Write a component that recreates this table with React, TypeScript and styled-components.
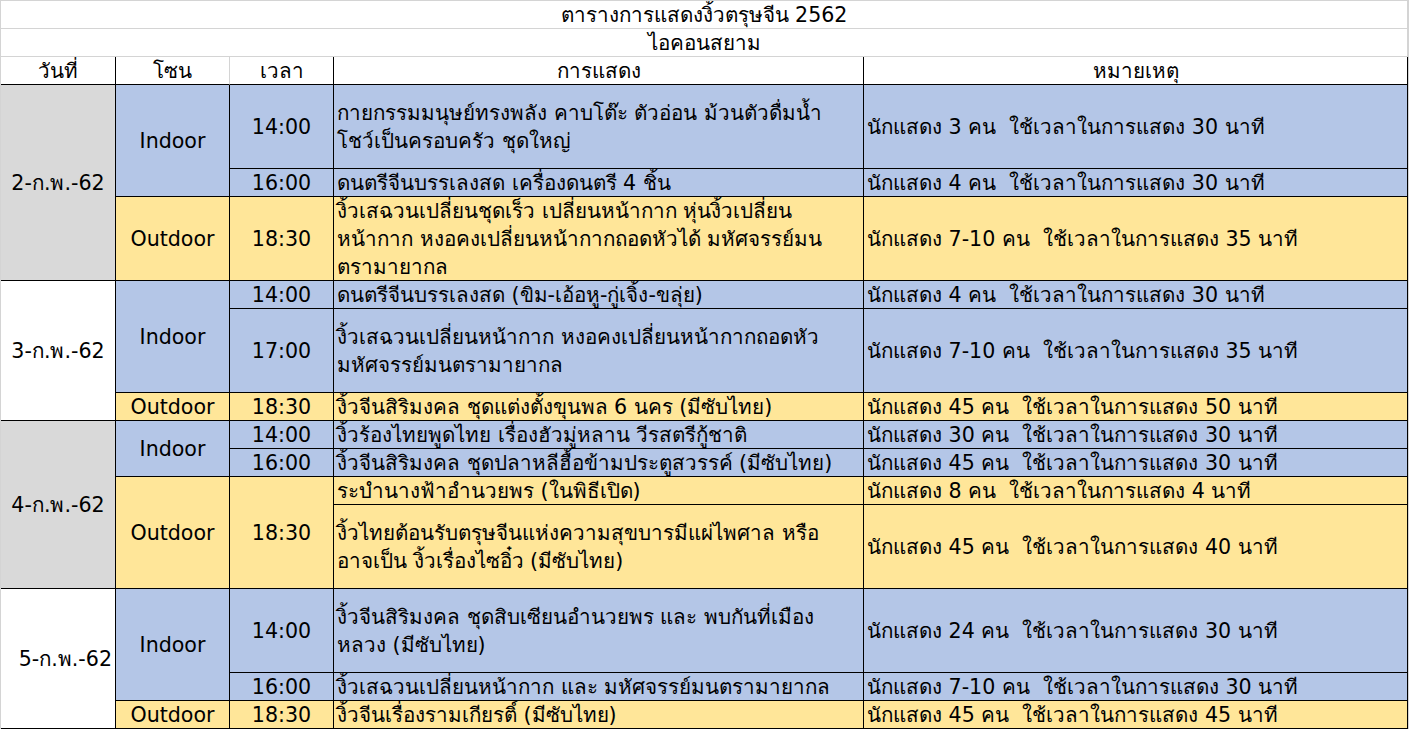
import React from "react";
import styled, { createGlobalStyle, css } from "styled-components";

const Global = createGlobalStyle`
  html, body { margin: 0; padding: 0; background: #ffffff; }
  body { font-family: Tahoma, "DejaVu Sans", "Noto Sans", sans-serif; color: #000; }
`;

const Sheet = styled.div`
  display: grid;
  grid-template-columns: 115px 114px 104px 530px 544px;
  grid-auto-rows: 28px;
  width: 1407px;
  border-left: 1px solid #d4d4d4;
  border-top: 1px solid #d4d4d4;
  border-right: 1px solid #d4d4d4;
  font-size: 20.6px;
  line-height: 28px;
`;

type Tone = "white" | "gray" | "blue" | "yellow";
const tones: Record<Tone, string> = {
  white: "#ffffff",
  gray: "#d9d9d9",
  blue: "#b4c6e7",
  yellow: "#ffe699",
};

const Cell = styled.div<{
  $tone?: Tone;
  $align?: "left" | "center" | "right";
  $row: string;
  $col: string;
  $soft?: boolean;
  $softRight?: boolean;
}>`
  box-sizing: border-box;
  grid-row: ${(p) => p.$row};
  grid-column: ${(p) => p.$col};
  background: ${(p) => tones[p.$tone ?? "white"]};
  border-right: 1px solid ${(p) => (p.$soft || p.$softRight ? "#d4d4d4" : "#000")};
  border-bottom: 1px solid ${(p) => (p.$soft ? "#d4d4d4" : "#000")};
  display: flex;
  align-items: center;
  white-space: pre-wrap;
  overflow: hidden;
  ${(p) =>
    p.$align === "left"
      ? css`justify-content: flex-start; padding-left: 3px;`
      : p.$align === "right"
      ? css`justify-content: flex-end; padding-right: 3px;`
      : css`justify-content: center; text-align: center;`}
`;

type Row = {
  date?: { text: string; span: number; tone: Tone; align?: "center" | "right" };
  zone?: { text: string; span: number; tone: Tone };
  time?: { text: string; span: number; tone: Tone };
  show: string;
  note: string;
  span: number;
  tone: Tone;
};

const rows: Row[] = [
  {
    date: { text: "2-ก.พ.-62", span: 7, tone: "gray" },
    zone: { text: "Indoor", span: 4, tone: "blue" },
    time: { text: "14:00", span: 3, tone: "blue" },
    show: "กายกรรมมนุษย์ทรงพลัง คาบโต๊ะ ตัวอ่อน ม้วนตัวดื่มน้ำ\nโชว์เป็นครอบครัว ชุดใหญ่",
    note: "นักแสดง 3 คน  ใช้เวลาในการแสดง 30 นาที",
    span: 3,
    tone: "blue",
  },
  {
    time: { text: "16:00", span: 1, tone: "blue" },
    show: "ดนตรีจีนบรรเลงสด เครื่องดนตรี 4 ชิ้น",
    note: "นักแสดง 4 คน  ใช้เวลาในการแสดง 30 นาที",
    span: 1,
    tone: "blue",
  },
  {
    zone: { text: "Outdoor", span: 3, tone: "yellow" },
    time: { text: "18:30", span: 3, tone: "yellow" },
    show: "งิ้วเสฉวนเปลี่ยนชุดเร็ว เปลี่ยนหน้ากาก หุ่นงิ้วเปลี่ยน\nหน้ากาก หงอคงเปลี่ยนหน้ากากถอดหัวได้ มหัศจรรย์มน\nตรามายากล",
    note: "นักแสดง 7-10 คน  ใช้เวลาในการแสดง 35 นาที",
    span: 3,
    tone: "yellow",
  },
  {
    date: { text: "3-ก.พ.-62", span: 5, tone: "white" },
    zone: { text: "Indoor", span: 4, tone: "blue" },
    time: { text: "14:00", span: 1, tone: "blue" },
    show: "ดนตรีจีนบรรเลงสด (ขิม-เอ้อหู-กู่เจิ้ง-ขลุ่ย)",
    note: "นักแสดง 4 คน  ใช้เวลาในการแสดง 30 นาที",
    span: 1,
    tone: "blue",
  },
  {
    time: { text: "17:00", span: 3, tone: "blue" },
    show: "งิ้วเสฉวนเปลี่ยนหน้ากาก หงอคงเปลี่ยนหน้ากากถอดหัว\nมหัศจรรย์มนตรามายากล",
    note: "นักแสดง 7-10 คน  ใช้เวลาในการแสดง 35 นาที",
    span: 3,
    tone: "blue",
  },
  {
    zone: { text: "Outdoor", span: 1, tone: "yellow" },
    time: { text: "18:30", span: 1, tone: "yellow" },
    show: "งิ้วจีนสิริมงคล ชุดแต่งตั้งขุนพล 6 นคร (มีซับไทย)",
    note: "นักแสดง 45 คน  ใช้เวลาในการแสดง 50 นาที",
    span: 1,
    tone: "yellow",
  },
  {
    date: { text: "4-ก.พ.-62", span: 6, tone: "gray" },
    zone: { text: "Indoor", span: 2, tone: "blue" },
    time: { text: "14:00", span: 1, tone: "blue" },
    show: "งิ้วร้องไทยพูดไทย เรื่องฮัวมู่หลาน วีรสตรีกู้ชาติ",
    note: "นักแสดง 30 คน  ใช้เวลาในการแสดง 30 นาที",
    span: 1,
    tone: "blue",
  },
  {
    time: { text: "16:00", span: 1, tone: "blue" },
    show: "งิ้วจีนสิริมงคล ชุดปลาหลีฮื้อข้ามประตูสวรรค์ (มีซับไทย)",
    note: "นักแสดง 45 คน  ใช้เวลาในการแสดง 30 นาที",
    span: 1,
    tone: "blue",
  },
  {
    zone: { text: "Outdoor", span: 4, tone: "yellow" },
    time: { text: "18:30", span: 4, tone: "yellow" },
    show: "ระบำนางฟ้าอำนวยพร (ในพิธีเปิด)",
    note: "นักแสดง 8 คน  ใช้เวลาในการแสดง 4 นาที",
    span: 1,
    tone: "yellow",
  },
  {
    show: "งิ้วไทยต้อนรับตรุษจีนแห่งความสุขบารมีแผ่ไพศาล หรือ\nอาจเป็น งิ้วเรื่องไซอิ๋ว (มีซับไทย)",
    note: "นักแสดง 45 คน  ใช้เวลาในการแสดง 40 นาที",
    span: 3,
    tone: "yellow",
  },
  {
    date: { text: "5-ก.พ.-62", span: 5, tone: "white", align: "right" },
    zone: { text: "Indoor", span: 4, tone: "blue" },
    time: { text: "14:00", span: 3, tone: "blue" },
    show: "งิ้วจีนสิริมงคล ชุดสิบเซียนอำนวยพร และ พบกันที่เมือง\nหลวง (มีซับไทย)",
    note: "นักแสดง 24 คน  ใช้เวลาในการแสดง 30 นาที",
    span: 3,
    tone: "blue",
  },
  {
    time: { text: "16:00", span: 1, tone: "blue" },
    show: "งิ้วเสฉวนเปลี่ยนหน้ากาก และ มหัศจรรย์มนตรามายากล",
    note: "นักแสดง 7-10 คน  ใช้เวลาในการแสดง 30 นาที",
    span: 1,
    tone: "blue",
  },
  {
    zone: { text: "Outdoor", span: 1, tone: "yellow" },
    time: { text: "18:30", span: 1, tone: "yellow" },
    show: "งิ้วจีนเรื่องรามเกียรติ์ (มีซับไทย)",
    note: "นักแสดง 45 คน  ใช้เวลาในการแสดง 45 นาที",
    span: 1,
    tone: "yellow",
  },
];

export default function App() {
  let r = 4;
  const cells: React.ReactNode[] = [];
  rows.forEach((row, i) => {
    const start = r;
    if (row.date)
      cells.push(
        <Cell key={`d${i}`} $row={`${start} / span ${row.date.span}`} $col="1" $tone={row.date.tone} $align={row.date.align ?? "center"}>
          {row.date.text}
        </Cell>
      );
    if (row.zone)
      cells.push(
        <Cell key={`z${i}`} $row={`${start} / span ${row.zone.span}`} $col="2" $tone={row.zone.tone}>
          {row.zone.text}
        </Cell>
      );
    if (row.time)
      cells.push(
        <Cell key={`t${i}`} $row={`${start} / span ${row.time.span}`} $col="3" $tone={row.time.tone}>
          {row.time.text}
        </Cell>
      );
    cells.push(
      <Cell key={`s${i}`} $row={`${start} / span ${row.span}`} $col="4" $tone={row.tone} $align="left">
        {row.show}
      </Cell>
    );
    cells.push(
      <Cell key={`n${i}`} $row={`${start} / span ${row.span}`} $col="5" $tone={row.tone} $align="left">
        {row.note}
      </Cell>
    );
    r += row.span;
  });

  return (
    <>
      <Global />
      <Sheet>
        <Cell $row="1" $col="1 / -1" $soft>
          ตารางการแสดงงิ้วตรุษจีน 2562
        </Cell>
        <Cell $row="2" $col="1 / -1" $soft>
          ไอคอนสยาม
        </Cell>
        <Cell $row="3" $col="1">วันที่</Cell>
        <Cell $row="3" $col="2" $softRight>โซน</Cell>
        <Cell $row="3" $col="3">เวลา</Cell>
        <Cell $row="3" $col="4">การแสดง</Cell>
        <Cell $row="3" $col="5">หมายเหตุ</Cell>
        {cells}
      </Sheet>
    </>
  );
}
